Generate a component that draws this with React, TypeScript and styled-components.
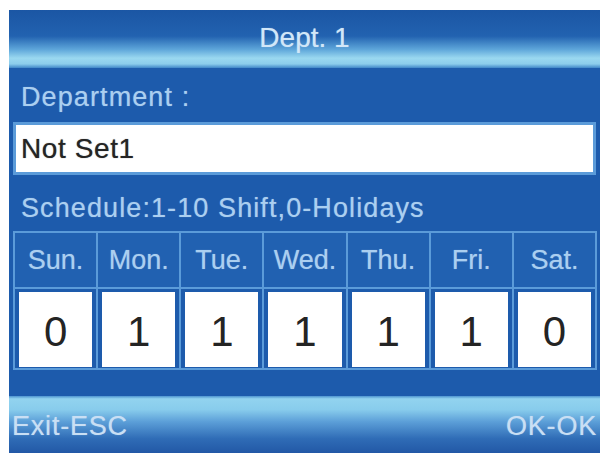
import React from "react";
import styled, { createGlobalStyle } from "styled-components";

const GlobalStyle = createGlobalStyle`
  html, body {
    margin: 0;
    padding: 0;
    background: #ffffff;
  }
  body {
    font-family: "Liberation Sans", Arial, sans-serif;
  }
`;

const colors = {
  body: "#1d5bac",
  line: "#5b9bd9",
  label: "#abcff0",
  title: "#d2e7f8",
  ink: "#242424",
};

const Screen = styled.div`
  display: flex;
  flex-direction: column;
  width: 591px;
  height: 443px;
  margin: 10px 0 0 9px;
  background: ${colors.body};
  overflow: hidden;
`;

const TitleBar = styled.div`
  height: 58px;
  display: flex;
  align-items: center;
  justify-content: center;
  padding-bottom: 2px;
  box-sizing: border-box;
  background: linear-gradient(
    180deg,
    #1b56a4 0%,
    #2262b0 45%,
    #5ea6da 68%,
    #9ad8f0 83%,
    #8ccdec 93%,
    #3f86c8 100%
  );
  color: ${colors.title};
  font-size: 28px;
  text-shadow: 0 0 1px rgba(210, 231, 248, 0.6);
`;

const Label = styled.div<{ $top: number }>`
  padding-left: 12px;
  margin-top: ${(p) => p.$top}px;
  height: 30px;
  line-height: 30px;
  font-size: 27px;
  letter-spacing: 1.1px;
  color: ${colors.label};
  text-shadow: 0 0 1px rgba(171, 207, 240, 0.6);
  white-space: nowrap;
`;

const InputBox = styled.div`
  margin: 10px 4px 0 4px;
  height: 47px;
  line-height: 47px;
  padding-left: 5px;
  background: #ffffff;
  border: 3px solid ${colors.line};
  color: ${colors.ink};
  font-size: 28px;
  letter-spacing: 0.6px;
  text-shadow: 0 0 1px rgba(0, 0, 0, 0.55);
`;

const Table = styled.div`
  display: grid;
  grid-template-columns: repeat(7, 1fr);
  margin: 8px 3px 0 4px;
  border: 2px solid ${colors.line};
  border-right: none;
  background: ${colors.body};
`;

const Column = styled.div`
  display: flex;
  flex-direction: column;
  border-right: 2px solid ${colors.line};
`;

const DayHead = styled.div`
  height: 54px;
  display: flex;
  align-items: center;
  justify-content: center;
  border-bottom: 2px solid ${colors.line};
  background: #2161b1;
  color: ${colors.label};
  font-size: 27px;
  text-shadow: 0 0 1px rgba(171, 207, 240, 0.6);
`;

const ValueWrap = styled.div`
  padding: 3px 4px 1px 4px;
`;

const Value = styled.div`
  height: 75px;
  display: flex;
  align-items: center;
  justify-content: center;
  padding-top: 5px;
  box-sizing: border-box;
  background: #ffffff;
  color: ${colors.ink};
  font-size: 42px;
`;

const Footer = styled.div`
  margin-top: auto;
  height: 57px;
  display: flex;
  justify-content: space-between;
  padding: 15px 3px 0 3px;
  box-sizing: border-box;
  background: linear-gradient(
    180deg,
    #4d93d0 0%,
    #92d3ef 5%,
    #88ccec 24%,
    #5c9fd8 45%,
    #2f6cb6 75%,
    #2258a6 100%
  );
  color: #c9dff4;
  font-size: 27px;
  line-height: 30px;
  letter-spacing: 0.8px;
  text-shadow: 0 0 1px rgba(201, 223, 244, 0.6);
`;

const days = [
  { name: "Sun.", value: 0 },
  { name: "Mon.", value: 1 },
  { name: "Tue.", value: 1 },
  { name: "Wed.", value: 1 },
  { name: "Thu.", value: 1 },
  { name: "Fri.", value: 1 },
  { name: "Sat.", value: 0 },
];

export default function App() {
  return (
    <>
      <GlobalStyle />
      <Screen>
        <TitleBar>Dept. 1</TitleBar>
        <Label $top={14}>Department :</Label>
        <InputBox>Not Set1</InputBox>
        <Label $top={18}>Schedule:1-10 Shift,0-Holidays</Label>
        <Table>
          {days.map((d) => (
            <Column key={d.name}>
              <DayHead>{d.name}</DayHead>
              <ValueWrap>
                <Value>{d.value}</Value>
              </ValueWrap>
            </Column>
          ))}
        </Table>
        <Footer>
          <span>Exit-ESC</span>
          <span>OK-OK</span>
        </Footer>
      </Screen>
    </>
  );
}
